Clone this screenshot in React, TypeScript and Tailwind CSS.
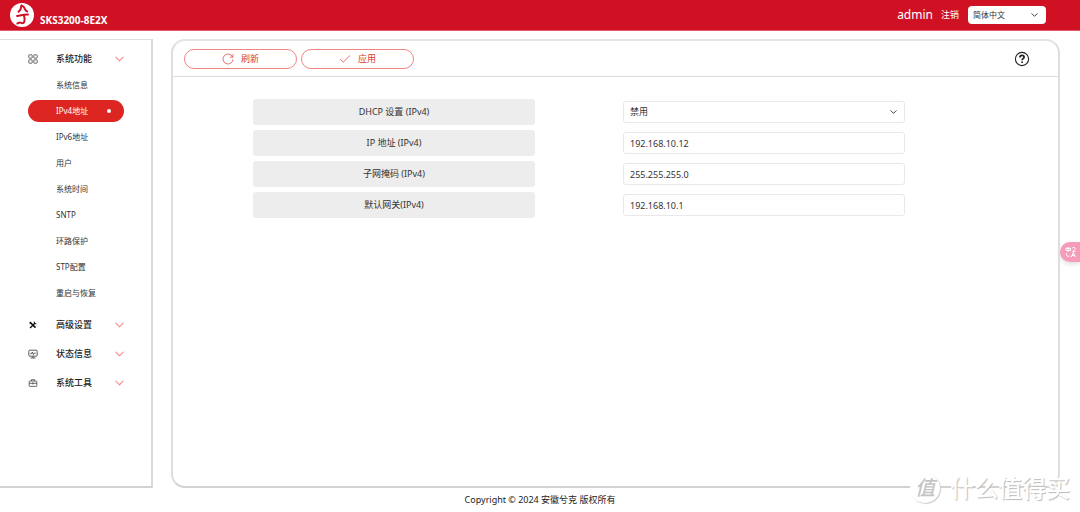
import type { ReactNode } from "react";
import clsx from "clsx";

const systemItems = [
  "系统信息",
  "IPv4地址",
  "IPv6地址",
  "用户",
  "系统时间",
  "SNTP",
  "环路保护",
  "STP配置",
  "重启与恢复",
];

const addressFields = [
  { id: "ip", label: "IP 地址 (IPv4)", value: "192.168.10.12" },
  { id: "mask", label: "子网掩码 (IPv4)", value: "255.255.255.0" },
  { id: "gateway", label: "默认网关(IPv4)", value: "192.168.10.1" },
];

const Chevron = ({ className }: { className: string }) => (
  <svg viewBox="0 0 10 6" fill="none" stroke="currentColor" className={className}>
    <path d="M1 1l4 4 4-4" strokeWidth="1.3" strokeLinecap="round" strokeLinejoin="round" />
  </svg>
);

const Logo = () => (
  <svg viewBox="0 0 24 24" className="size-6 shrink-0">
    <circle cx="12" cy="12" r="12" fill="#fff" />
    <g fill="none" stroke="#d01124" strokeWidth="2" strokeLinecap="round" strokeLinejoin="round">
      <path d="M11.500 2.600C11.300 5 10.500 7 8.600 8.800" />
      <path d="M11.500 2.800c1.800.2 2.500 1 3 2.400.4 1.300 1.200 2.400 2.600 3.200" />
      <path d="M7 12.900c2.500.2 6-1.600 11-1.500" />
      <path d="M13.800 12c.9 3 1.300 6-.2 7.800-.8 1-2 .2-3.200-.2-1-.3-2 .4-3 .900" />
    </g>
  </svg>
);

const GridIcon = () => (
  <svg viewBox="0 0 10 10" className="size-2.5" fill="none" stroke="#444" strokeWidth="0.8">
    <rect x="0.800" y="0.800" width="3.400" height="3.400" rx="0.6" />
    <rect x="5.800" y="0.800" width="3.400" height="3.400" rx="0.6" />
    <rect x="0.800" y="5.800" width="3.400" height="3.400" rx="0.6" />
    <rect x="5.800" y="5.800" width="3.400" height="3.400" rx="0.6" />
  </svg>
);

const ToolsIcon = () => (
  <svg viewBox="0 0 10 10" className="size-2.5" fill="none" stroke="#111">
    <path d="M2.200 2.500l5.300 5.200" strokeWidth="1.700" />
    <path d="M2 8l5.200-5" strokeWidth="1.300" />
    <path d="M6.300 1.800l.2 1.700 1.900.2M1.500 3.300l1.600-1.500" strokeWidth="1.100" />
  </svg>
);

const MonitorIcon = () => (
  <svg viewBox="0 0 10 10" className="size-2.5" fill="none" stroke="#333" strokeWidth="0.8">
    <rect x="0.800" y="1.200" width="8.400" height="6" rx="1" />
    <path d="M2.200 4.700h1.300l.8-1.700 1.100 2.600.8-1.400h1.600M2.500 9h5M5 7.200V9" />
  </svg>
);

const ToolboxIcon = () => (
  <svg viewBox="0 0 10 10" className="size-2.5" fill="none" stroke="#444" strokeWidth="0.8">
    <rect x="1.200" y="3" width="7.600" height="5.400" rx="0.7" />
    <path d="M3.400 3V1.700h3.200V3M1.200 5.300h7.600M5 4.200v2.300" />
  </svg>
);

type GroupProps = {
  icon: ReactNode;
  title: string;
  children?: ReactNode;
};

const Group = ({ icon, title, children }: GroupProps) => (
  <li>
    <button type="button" className="flex items-center w-full h-[26px] text-[9px] font-medium text-[#222]">
      <span className="w-7 flex justify-start">{icon}</span>
      {title}
      <Chevron className="w-[9px] h-1.5 ml-auto text-[#f0918e]" />
    </button>
    {children}
  </li>
);

const Sidebar = () => (
  <nav className="w-[153px] shrink-0 pl-7 pr-[27px] pt-1.5 border-t border-t-[#dedede] border-r-2 border-r-[#dadada] border-b-2 border-b-[#d2d2d2]">
    <ul className="flex flex-col gap-[3px]">
      <Group icon={<GridIcon />} title="系统功能">
        <ul className="pb-[3px]">
          {systemItems.map((item) => {
            const active = item === "IPv4地址";
            return (
              <li key={item} className="py-0.5">
                <a
                  href="#"
                  aria-current={active ? "page" : undefined}
                  className={clsx(
                    "flex items-center justify-between h-[22px] pl-7 pr-[13px] rounded-full text-[8px] whitespace-nowrap",
                    active ? "bg-[#dd2622] text-white" : "text-[#333]"
                  )}
                >
                  {item}
                  {active && <span className="size-1 rounded-full bg-white" />}
                </a>
              </li>
            );
          })}
        </ul>
      </Group>
      <Group icon={<ToolsIcon />} title="高级设置" />
      <Group icon={<MonitorIcon />} title="状态信息" />
      <Group icon={<ToolboxIcon />} title="系统工具" />
    </ul>
  </nav>
);

const Header = () => (
  <header className="flex items-center h-[31px] pl-2.5 pr-[34px] bg-[#d01124] border-b border-[#df5966] text-white">
    <Logo />
    <h1 className="ml-1.5 mt-2.5 text-[10px] leading-4 font-bold">SKS3200-8E2X</h1>
    <span className="ml-auto text-[12px]">admin</span>
    <a href="#" className="ml-2 text-[9px]">
      注销
    </a>
    <div className="relative ml-[9px]">
      <select
        aria-label="语言"
        className="block appearance-none w-[78px] h-[18px] pl-[5px] rounded-sm bg-white text-[8px] text-[#333]"
      >
        <option>简体中文</option>
        <option>English</option>
      </select>
      <Chevron className="absolute right-2 top-[7px] w-[7px] h-1 text-[#222] pointer-events-none" />
    </div>
  </header>
);

const Toolbar = () => (
  <div className="flex items-center h-[36px] pl-[11px] pr-7 gap-1 border-b border-[#dcdcdc]">
    <button
      type="button"
      className="flex items-center justify-center gap-[7px] w-[113px] h-5 rounded-full border border-[#ee8380] text-[9px] text-[#d93a36]"
    >
      <svg viewBox="0 0 12 12" className="size-3" fill="none" stroke="#e4605d" strokeWidth="0.9">
        <path d="M10.600 4A5 5 0 1 0 11 6.300M11 1.200v3H8" />
      </svg>
      刷新
    </button>
    <button
      type="button"
      className="flex items-center justify-center gap-[7px] w-[113px] h-5 rounded-full border border-[#ee8380] text-[9px] text-[#d93a36]"
    >
      <svg viewBox="0 0 12 12" className="size-3" fill="none" stroke="#e4605d" strokeWidth="0.9">
        <path d="M1.200 6.200l3 3L11 2.500" />
      </svg>
      应用
    </button>
    <button type="button" aria-label="帮助" className="ml-auto">
      <svg viewBox="0 0 16 16" className="size-4" fill="none" stroke="#222">
        <circle cx="8" cy="8" r="6.600" strokeWidth="1.100" />
        <path d="M5.900 6.400c0-1.300.9-2.100 2.100-2.100s2.100.8 2.100 1.900c0 1.500-2 1.500-2 3.100" strokeWidth="1.700" />
        <path d="M8.100 10.400v1.600" strokeWidth="1.700" />
      </svg>
    </button>
  </div>
);

const FieldRow = ({ id, label, children }: { id: string; label: string; children: ReactNode }) => (
  <div className="grid grid-cols-2 items-center gap-x-[88px]">
    <label
      htmlFor={id}
      className="flex items-center justify-center h-[26px] rounded-[3px] bg-[#ededed] text-[9px] text-[#333]"
    >
      {label}
    </label>
    {children}
  </div>
);

const AddressForm = () => (
  <form className="flex flex-col gap-[5px] pt-[22px] pl-20 pr-[153px]">
    <FieldRow id="dhcp" label="DHCP 设置 (IPv4)">
      <div className="relative">
        <select
          id="dhcp"
          className="block appearance-none w-full h-[22px] px-1.5 rounded-[3px] border border-[#e9e9e9] bg-white text-[9px] text-[#333]"
        >
          <option>禁用</option>
          <option>启用</option>
        </select>
        <Chevron className="absolute right-2 top-[9px] w-[7px] h-1 text-[#222] pointer-events-none" />
      </div>
    </FieldRow>
    {addressFields.map((field) => (
      <FieldRow key={field.id} id={field.id} label={field.label}>
        <input
          id={field.id}
          type="text"
          defaultValue={field.value}
          className="w-full h-[22px] px-1.5 rounded-[3px] border border-[#e9e9e9] text-[9px] text-[#333]"
        />
      </FieldRow>
    ))}
  </form>
);

const Watermark = () => (
  <div className="absolute right-2.5 bottom-2 flex items-center gap-2.5 text-white pointer-events-none">
    <span className="flex items-center justify-center size-[30px] rounded-full bg-white shadow-[1px_1px_1px_#ccc] text-[20px] leading-none font-medium italic text-[#c4c4c4]">
      值
    </span>
    <span className="text-[24px] leading-8 font-medium [text-shadow:1px_1px_1px_#bbb]">什么值得买</span>
  </div>
);

const App = () => {
  return (
    <div className="relative flex flex-col min-h-screen overflow-hidden bg-white font-['Noto_Sans','Noto_Sans_CJK_SC',sans-serif]">
      <Header />
      <div className="flex flex-1 pt-2">
        <Sidebar />
        <main className="flex-1 ml-[18px] mr-5 rounded-[14px] border-2 border-t-[#e4e4e4] border-x-[#dedede] border-b-[#d2d2d2]">
          <Toolbar />
          <AddressForm />
        </main>
      </div>
      <footer className="h-6 text-center text-[9px] leading-6 text-[#222]">Copyright © 2024 安徽兮克 版权所有</footer>
      <button
        type="button"
        aria-label="翻译"
        className="absolute right-0 top-[242px] flex items-center justify-center w-5 h-5 pl-0.5 rounded-l-full bg-[#f49cba] text-white shadow-[0_2px_5px_#ddd]"
      >
        <svg viewBox="0 0 12 12" className="size-3" fill="none" stroke="currentColor">
          <path d="M1 2.200h4.500v2.300H1zM3.200 1v5M7.300 2c1-.9 3-.6 3 .6 0 1-1.500 1.500-2.700 2.700h3.100M1.500 7.200v1.500c0 1 .6 1.500 1.500 1.500h1.500M6.300 11l2-4.500 2 4.500M7 9.600h2.600" />
        </svg>
      </button>
      <Watermark />
    </div>
  );
};

export default App;
